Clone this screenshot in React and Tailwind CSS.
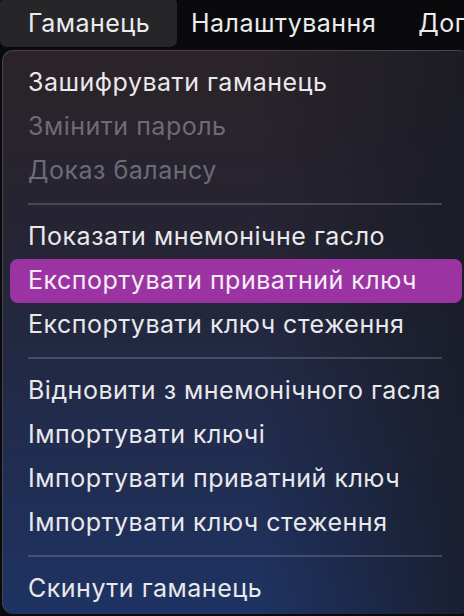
import React from "react";

const groups = [
  [
    { t: "Зашифрувати гаманець" },
    { t: "Змінити пароль", d: true },
    { t: "Доказ балансу", d: true },
  ],
  [
    { t: "Показати мнемонічне гасло" },
    { t: "Експортувати приватний ключ", h: true },
    { t: "Експортувати ключ стеження" },
  ],
  [
    { t: "Відновити з мнемонічного гасла" },
    { t: "Імпортувати ключі" },
    { t: "Імпортувати приватний ключ" },
    { t: "Імпортувати ключ стеження" },
  ],
  [{ t: "Скинути гаманець" }],
];

export default function App() {
  return (
    <div
      className="w-[464px] h-[616px] overflow-hidden bg-[#0a0a0c] text-[25px] tracking-[0.5px]"
      style={{ fontFamily: "Inter, 'Noto Sans', sans-serif" }}
    >
      <div className="h-[48px] flex items-stretch text-[#ececee]">
        <div className="w-[177px] shrink-0 h-[47px] bg-[#262629] rounded-b-[7px] rounded-t-[3px] flex items-center pl-[28px]">
          Гаманець
        </div>
        <div className="flex items-center pl-[14px] pb-[1px] whitespace-nowrap">Налаштування</div>
        <div className="flex items-center pl-[42px] pb-[1px] whitespace-nowrap">Доп</div>
      </div>
      <div className="mt-[2px] ml-[2px] w-[468px] h-[564px] rounded-[11px] border-t border-l border-[#45454b] overflow-hidden relative bg-[linear-gradient(180deg,#2b2328_0%,#262432_30%,#222a48_60%,#1e3363_100%)]">
        <div className="absolute inset-0 bg-[linear-gradient(90deg,rgba(0,0,0,0)_55%,rgba(24,26,36,0.8)_100%)]" />
        <div className="relative pt-[10px]">
          {groups.map((g, gi) => (
            <div key={gi}>
              {gi > 0 && (
                <div className="h-[22px] flex items-center">
                  <div className="ml-[25px] w-[414px] h-[1.5px] bg-[rgba(255,255,255,0.17)]" />
                </div>
              )}
              {g.map((it, i) => (
                <div
                  key={i}
                  className={
                    "h-[44px] flex items-center whitespace-nowrap " +
                    (it.h
                      ? "ml-[7px] mr-[8px] rounded-[8px] bg-[#9b34a2] pl-[18px] text-[#f6eef7]"
                      : "pl-[25px] ") +
                    (it.d ? "text-[#6c6c76]" : it.h ? "" : "text-[#e9e9ec]")
                  }
                >
                  {it.t}
                </div>
              ))}
            </div>
          ))}
        </div>
      </div>
    </div>
  );
}
